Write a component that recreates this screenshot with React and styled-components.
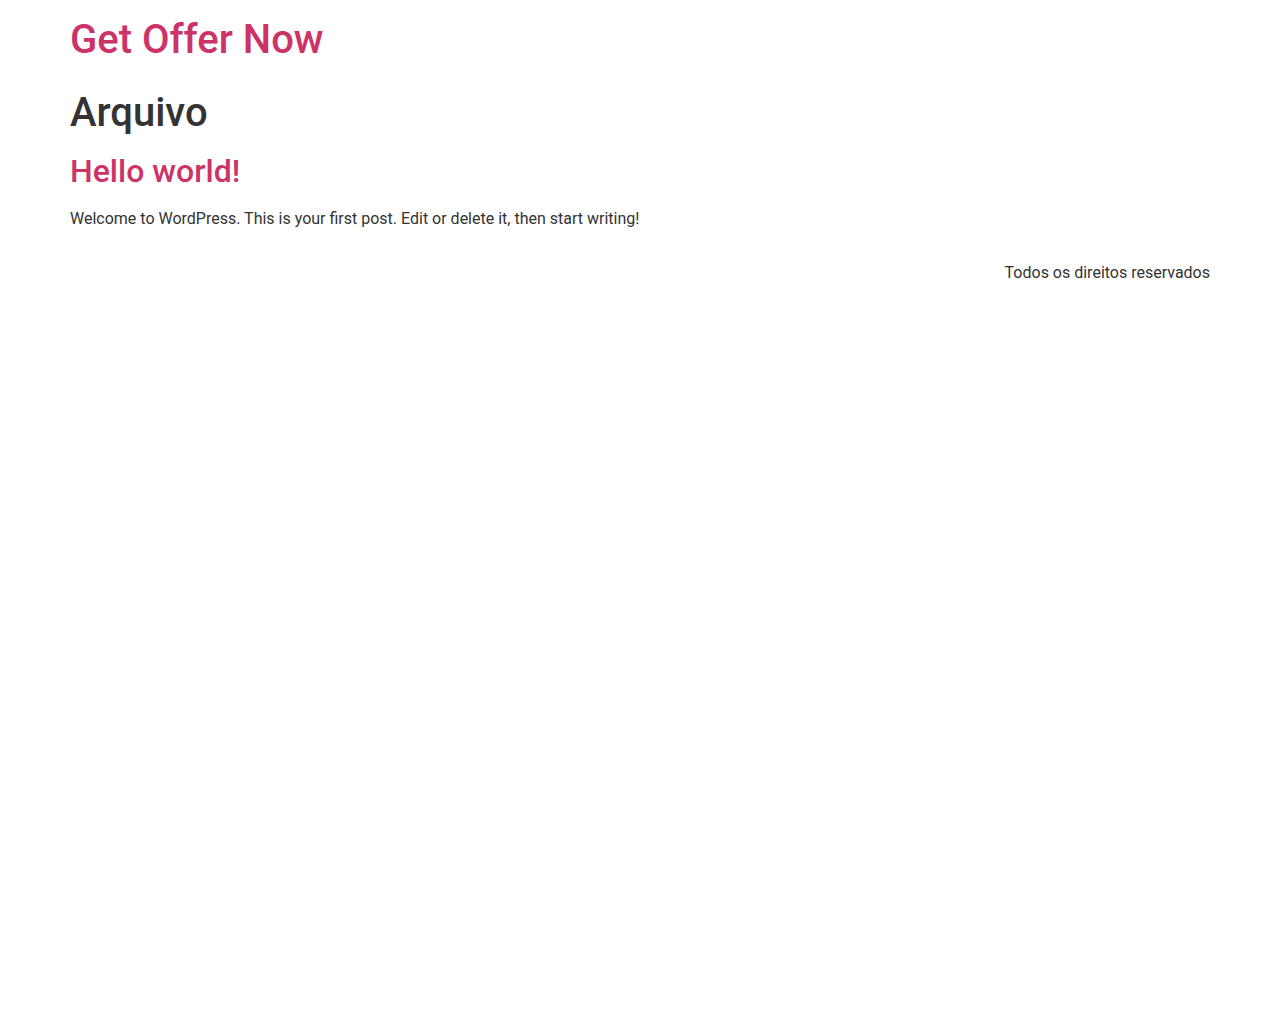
import React from "react";
import styled, { createGlobalStyle } from "styled-components";

const Global = createGlobalStyle`
  html { line-height: 1.15; }
  body {
    margin: 0;
    background: #fff;
    color: #333;
    font-family: Roboto, "Noto Sans", "Liberation Sans", sans-serif;
    font-size: 16px;
    line-height: 1.5;
  }
  * { box-sizing: border-box; }
`;

const Container = styled.div`
  max-width: 1140px;
  margin: 0 auto;
`;

const Header = styled.header`
  display: flex;
  justify-content: space-between;
  align-items: center;
  padding: 16px 0 17px;
`;

const SiteTitle = styled.h1`
  margin: 0 0 8px;
  font-size: 40px;
  font-weight: 500;
  line-height: 1.2;
`;

const Link = styled.a`
  color: #c36;
  text-decoration: none;
`;

const PageTitle = styled.h1`
  margin: 0 0 15px;
  font-size: 40px;
  font-weight: 500;
  line-height: 1.2;
  color: #333;
`;

const PostTitle = styled.h2`
  margin: 0 0 17px;
  font-size: 32px;
  font-weight: 500;
  line-height: 1.2;
`;

const Excerpt = styled.p`
  margin: 0 0 14px;
  font-size: 16px;
`;

const Footer = styled.footer`
  display: flex;
  justify-content: flex-end;
  padding: 16px 0;
`;

const Copyright = styled.p`
  margin: 0;
`;

export default function App() {
  return (
    <>
      <Global />
      <Container>
        <Header>
          <SiteTitle>
            <Link href="#">Get Offer Now</Link>
          </SiteTitle>
        </Header>
        <main>
          <PageTitle>Arquivo</PageTitle>
          <article>
            <PostTitle>
              <Link href="#">Hello world!</Link>
            </PostTitle>
            <Excerpt>
              Welcome to WordPress. This is your first post. Edit or delete it, then start writing!
            </Excerpt>
          </article>
        </main>
        <Footer>
          <Copyright>Todos os direitos reservados</Copyright>
        </Footer>
      </Container>
    </>
  );
}
